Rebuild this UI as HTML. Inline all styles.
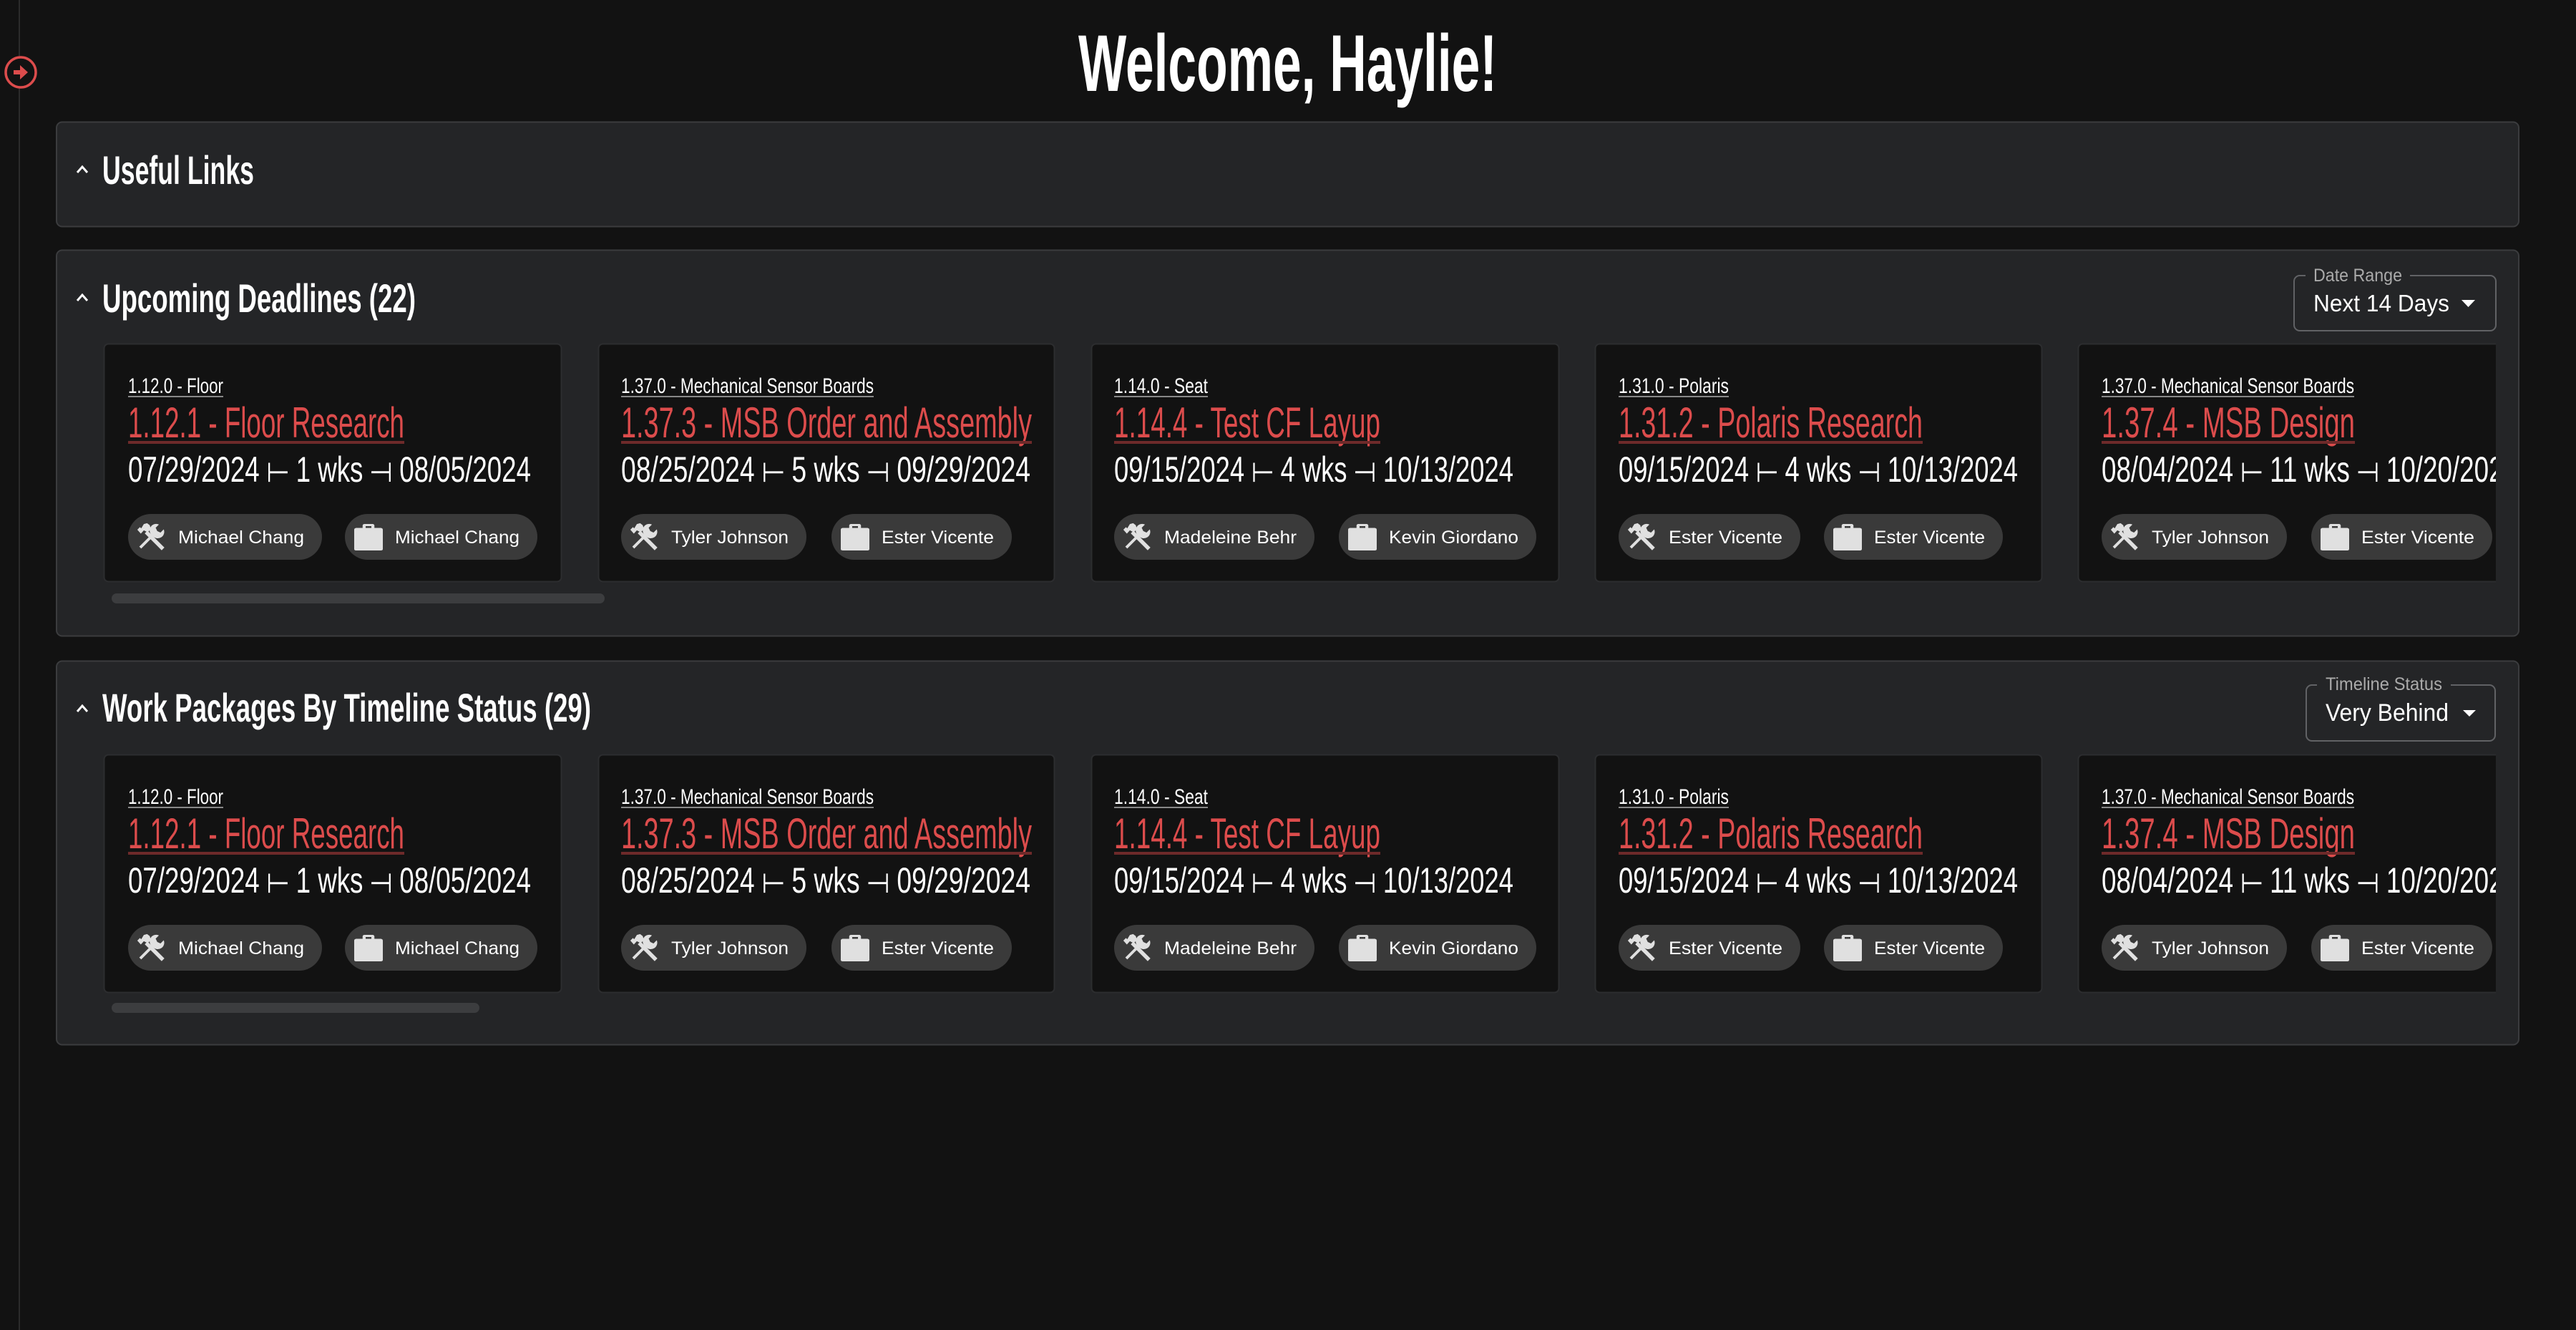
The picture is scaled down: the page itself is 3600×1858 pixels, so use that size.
<!DOCTYPE html>
<html><head><meta charset="utf-8"><style>
html,body{margin:0;padding:0;background:#121212;width:3600px;height:1858px;overflow:hidden}
svg{display:block}
.h{font-family:"Liberation Sans",sans-serif;font-weight:bold;fill:#fff}
.c{font-family:"Liberation Sans","DejaVu Sans",sans-serif;fill:#fff}
.bc{font-size:30px}
.tt{font-size:60px;fill:#dc4c4c}
.dt{font-size:50px}
.ch{font-family:"Liberation Sans",sans-serif;font-size:25px;fill:#fff}
.lat{font-family:"Liberation Sans",sans-serif}
</style></head><body>
<svg width="3600" height="1858" viewBox="0 0 3600 1858" xmlns="http://www.w3.org/2000/svg">
<defs>
<symbol id="tools" viewBox="1 1 22 22">
<g fill="#e0e0e0" stroke="none">
<path d="M7.2 9.3 L20.2 22.3 L22.3 20.2 L9.3 7.2 Z"/>
<path d="M1.5 6.5 L3.5 4.5 L4.5 5.5 L6.5 2.2 L9 1.5 L11 3 L12 6 L9.5 8.5 L6.5 7 L4.2 9.5 Z"/>
<path d="M3 19.5 L13 9.5 L14.5 11 L4.5 21 Z"/>
<path d="M12.2 10.3 L13.8 11.8 A5 5 0 0 0 21.8 6.2 L19.3 8.7 L16.8 7.5 L15.6 5 L18.1 2.5 A5 5 0 0 0 12.2 10.3 Z"/>
</g>
</symbol>
<symbol id="case" viewBox="3.5 2 17 20" preserveAspectRatio="none">
<path fill="#e0e0e0" d="M8.5 5 V3.2 C8.5 2.5 9 2 9.7 2 H14.3 C15 2 15.5 2.5 15.5 3.2 V5 H19 C20.1 5 20.5 5.6 20.5 6.5 V21 C20.5 21.6 20 22 19.4 22 H4.6 C4 22 3.5 21.6 3.5 21 V6.5 C3.5 5.6 3.9 5 5 5 Z M10.3 3.6 V5 H13.7 V3.6 Z"/>
</symbol>
<clipPath id="clip1"><rect x="140" y="470" width="3348" height="360"/></clipPath>
<clipPath id="clip2"><rect x="140" y="1044" width="3348" height="360"/></clipPath>
<g id="none"></g>
</defs>

<!-- sidebar -->
<rect x="26" y="0" width="2" height="1858" fill="#2b2b2b"/>
<circle cx="29" cy="101" r="21" fill="#121212" stroke="#dc4c4c" stroke-width="3.5"/>
<path d="M19 98 H28 V91 L39 101 L28 111 V104 H19 Z" fill="#dc4c4c"/>

<!-- title -->
<text class="h" x="1507" y="127" font-size="112" textLength="585" lengthAdjust="spacingAndGlyphs">Welcome, Haylie!</text>

<!-- panel 1 -->
<rect x="79" y="170.5" width="3441" height="146" rx="8" fill="#242527" stroke="#3b3c3e" stroke-width="2"/>
<path d="M108 241 L115 233 L122 241" fill="none" stroke="#fff" stroke-width="3"/>
<text class="h" x="143" y="257" font-size="56" textLength="212" lengthAdjust="spacingAndGlyphs">Useful Links</text>

<!-- panel 2 -->
<rect x="79" y="349.5" width="3441" height="539" rx="8" fill="#242527" stroke="#3b3c3e" stroke-width="2"/>
<path d="M108 420 L115 412 L122 420" fill="none" stroke="#fff" stroke-width="3"/>
<text class="h" x="143" y="436" font-size="56" textLength="438" lengthAdjust="spacingAndGlyphs">Upcoming Deadlines (22)</text>
<rect x="3206" y="385" width="282" height="77" rx="8" fill="none" stroke="#616265" stroke-width="2"/>
<rect x="3222" y="376" width="146" height="16" fill="#242527"/>
<text class="lat" x="3233" y="393" font-size="25" fill="#aaa" textLength="124" lengthAdjust="spacingAndGlyphs">Date Range</text>
<text class="lat" x="3233" y="435" font-size="33" fill="#fff" textLength="190" lengthAdjust="spacingAndGlyphs">Next 14 Days</text>
<path d="M3440 419 H3459 L3449.5 429 Z" fill="#fff"/>

<!-- panel 3 -->
<rect x="79" y="923.5" width="3441" height="536" rx="8" fill="#242527" stroke="#3b3c3e" stroke-width="2"/>
<path d="M108 994 L115 986 L122 994" fill="none" stroke="#fff" stroke-width="3"/>
<text class="h" x="143" y="1008" font-size="56" textLength="683" lengthAdjust="spacingAndGlyphs">Work Packages By Timeline Status (29)</text>
<rect x="3223" y="957" width="264" height="78" rx="8" fill="none" stroke="#616265" stroke-width="2"/>
<rect x="3238" y="948" width="187" height="16" fill="#242527"/>
<text class="lat" x="3250" y="964" font-size="25" fill="#aaa" textLength="163" lengthAdjust="spacingAndGlyphs">Timeline Status</text>
<text class="lat" x="3250" y="1007" font-size="34" fill="#fff" textLength="172" lengthAdjust="spacingAndGlyphs">Very Behind</text>
<path d="M3442 992 H3460 L3451 1001 Z" fill="#fff"/>

<!-- ROW 1 -->
<g clip-path="url(#clip1)">
<g>
<rect x="145.5" y="480.5" width="639" height="332" rx="6" fill="#121212" stroke="#2c2d2f" stroke-width="2"/>
<text class="c bc" x="179" y="549" textLength="133" lengthAdjust="spacingAndGlyphs">1.12.0 - Floor</text><rect x="179" y="553" width="133" height="2" fill="#888"/>
<text class="c tt" x="179" y="611" textLength="386" lengthAdjust="spacingAndGlyphs">1.12.1 - Floor Research</text><rect x="179" y="616" width="386" height="4" fill="#6e2a2a"/>
<text class="c dt" x="179" y="673" textLength="563" lengthAdjust="spacingAndGlyphs">07/29/2024 ⟝ 1 wks ⟞ 08/05/2024</text>
<rect x="179" y="718" width="271" height="64" rx="32" fill="#3a3a3a"/><use href="#tools" x="191" y="730" width="40" height="40"/><text class="ch" x="249" y="759" textLength="176" lengthAdjust="spacingAndGlyphs">Michael Chang</text>
<rect x="482" y="718" width="269" height="64" rx="32" fill="#3a3a3a"/><use href="#case" x="495" y="732" width="40" height="37"/><text class="ch" x="552" y="759" textLength="174" lengthAdjust="spacingAndGlyphs">Michael Chang</text>
</g>
<g>
<rect x="836.5" y="480.5" width="637" height="332" rx="6" fill="#121212" stroke="#2c2d2f" stroke-width="2"/>
<text class="c bc" x="868" y="549" textLength="353" lengthAdjust="spacingAndGlyphs">1.37.0 - Mechanical Sensor Boards</text><rect x="868" y="553" width="353" height="2" fill="#888"/>
<text class="c tt" x="868" y="611" textLength="574" lengthAdjust="spacingAndGlyphs">1.37.3 - MSB Order and Assembly</text><rect x="868" y="616" width="574" height="4" fill="#6e2a2a"/>
<text class="c dt" x="868" y="673" textLength="572" lengthAdjust="spacingAndGlyphs">08/25/2024 ⟝ 5 wks ⟞ 09/29/2024</text>
<rect x="868" y="718" width="259" height="64" rx="32" fill="#3a3a3a"/><use href="#tools" x="880" y="730" width="40" height="40"/><text class="ch" x="938" y="759" textLength="164" lengthAdjust="spacingAndGlyphs">Tyler Johnson</text>
<rect x="1162" y="718" width="252" height="64" rx="32" fill="#3a3a3a"/><use href="#case" x="1175" y="732" width="40" height="37"/><text class="ch" x="1232" y="759" textLength="157" lengthAdjust="spacingAndGlyphs">Ester Vicente</text>
</g>
<g>
<rect x="1525.5" y="480.5" width="653" height="332" rx="6" fill="#121212" stroke="#2c2d2f" stroke-width="2"/>
<text class="c bc" x="1557" y="549" textLength="131" lengthAdjust="spacingAndGlyphs">1.14.0 - Seat</text><rect x="1557" y="553" width="131" height="2" fill="#888"/>
<text class="c tt" x="1557" y="611" textLength="372" lengthAdjust="spacingAndGlyphs">1.14.4 - Test CF Layup</text><rect x="1557" y="616" width="372" height="4" fill="#6e2a2a"/>
<text class="c dt" x="1557" y="673" textLength="558" lengthAdjust="spacingAndGlyphs">09/15/2024 ⟝ 4 wks ⟞ 10/13/2024</text>
<rect x="1557" y="718" width="280" height="64" rx="32" fill="#3a3a3a"/><use href="#tools" x="1569" y="730" width="40" height="40"/><text class="ch" x="1627" y="759" textLength="185" lengthAdjust="spacingAndGlyphs">Madeleine Behr</text>
<rect x="1871" y="718" width="276" height="64" rx="32" fill="#3a3a3a"/><use href="#case" x="1884" y="732" width="40" height="37"/><text class="ch" x="1941" y="759" textLength="181" lengthAdjust="spacingAndGlyphs">Kevin Giordano</text>
</g>
<g>
<rect x="2229.5" y="480.5" width="624" height="332" rx="6" fill="#121212" stroke="#2c2d2f" stroke-width="2"/>
<text class="c bc" x="2262" y="549" textLength="154" lengthAdjust="spacingAndGlyphs">1.31.0 - Polaris</text><rect x="2262" y="553" width="154" height="2" fill="#888"/>
<text class="c tt" x="2262" y="611" textLength="425" lengthAdjust="spacingAndGlyphs">1.31.2 - Polaris Research</text><rect x="2262" y="616" width="425" height="4" fill="#6e2a2a"/>
<text class="c dt" x="2262" y="673" textLength="558" lengthAdjust="spacingAndGlyphs">09/15/2024 ⟝ 4 wks ⟞ 10/13/2024</text>
<rect x="2262" y="718" width="254" height="64" rx="32" fill="#3a3a3a"/><use href="#tools" x="2274" y="730" width="40" height="40"/><text class="ch" x="2332" y="759" textLength="159" lengthAdjust="spacingAndGlyphs">Ester Vicente</text>
<rect x="2549" y="718" width="250" height="64" rx="32" fill="#3a3a3a"/><use href="#case" x="2562" y="732" width="40" height="37"/><text class="ch" x="2619" y="759" textLength="155" lengthAdjust="spacingAndGlyphs">Ester Vicente</text>
</g>
<g>
<rect x="2904.5" y="480.5" width="650" height="332" rx="6" fill="#121212" stroke="#2c2d2f" stroke-width="2"/>
<text class="c bc" x="2937" y="549" textLength="353" lengthAdjust="spacingAndGlyphs">1.37.0 - Mechanical Sensor Boards</text><rect x="2937" y="553" width="353" height="2" fill="#888"/>
<text class="c tt" x="2937" y="611" textLength="354" lengthAdjust="spacingAndGlyphs">1.37.4 - MSB Design</text><rect x="2937" y="616" width="354" height="4" fill="#6e2a2a"/>
<text class="c dt" x="2937" y="673" textLength="582" lengthAdjust="spacingAndGlyphs">08/04/2024 ⟝ 11 wks ⟞ 10/20/2024</text>
<rect x="2937" y="718" width="259" height="64" rx="32" fill="#3a3a3a"/><use href="#tools" x="2949" y="730" width="40" height="40"/><text class="ch" x="3007" y="759" textLength="164" lengthAdjust="spacingAndGlyphs">Tyler Johnson</text>
<rect x="3230" y="718" width="253" height="64" rx="32" fill="#3a3a3a"/><use href="#case" x="3243" y="732" width="40" height="37"/><text class="ch" x="3300" y="759" textLength="158" lengthAdjust="spacingAndGlyphs">Ester Vicente</text>
</g>
</g>
<rect x="156" y="829" width="689" height="14" rx="7" fill="#3c3d3f"/>

<!-- ROW 2 -->
<g clip-path="url(#clip2)">
<g transform="translate(0,574)">
<g>
<rect x="145.5" y="480.5" width="639" height="332" rx="6" fill="#121212" stroke="#2c2d2f" stroke-width="2"/>
<text class="c bc" x="179" y="549" textLength="133" lengthAdjust="spacingAndGlyphs">1.12.0 - Floor</text><rect x="179" y="553" width="133" height="2" fill="#888"/>
<text class="c tt" x="179" y="611" textLength="386" lengthAdjust="spacingAndGlyphs">1.12.1 - Floor Research</text><rect x="179" y="616" width="386" height="4" fill="#6e2a2a"/>
<text class="c dt" x="179" y="673" textLength="563" lengthAdjust="spacingAndGlyphs">07/29/2024 ⟝ 1 wks ⟞ 08/05/2024</text>
<rect x="179" y="718" width="271" height="64" rx="32" fill="#3a3a3a"/><use href="#tools" x="191" y="730" width="40" height="40"/><text class="ch" x="249" y="759" textLength="176" lengthAdjust="spacingAndGlyphs">Michael Chang</text>
<rect x="482" y="718" width="269" height="64" rx="32" fill="#3a3a3a"/><use href="#case" x="495" y="732" width="40" height="37"/><text class="ch" x="552" y="759" textLength="174" lengthAdjust="spacingAndGlyphs">Michael Chang</text>
</g>
<g>
<rect x="836.5" y="480.5" width="637" height="332" rx="6" fill="#121212" stroke="#2c2d2f" stroke-width="2"/>
<text class="c bc" x="868" y="549" textLength="353" lengthAdjust="spacingAndGlyphs">1.37.0 - Mechanical Sensor Boards</text><rect x="868" y="553" width="353" height="2" fill="#888"/>
<text class="c tt" x="868" y="611" textLength="574" lengthAdjust="spacingAndGlyphs">1.37.3 - MSB Order and Assembly</text><rect x="868" y="616" width="574" height="4" fill="#6e2a2a"/>
<text class="c dt" x="868" y="673" textLength="572" lengthAdjust="spacingAndGlyphs">08/25/2024 ⟝ 5 wks ⟞ 09/29/2024</text>
<rect x="868" y="718" width="259" height="64" rx="32" fill="#3a3a3a"/><use href="#tools" x="880" y="730" width="40" height="40"/><text class="ch" x="938" y="759" textLength="164" lengthAdjust="spacingAndGlyphs">Tyler Johnson</text>
<rect x="1162" y="718" width="252" height="64" rx="32" fill="#3a3a3a"/><use href="#case" x="1175" y="732" width="40" height="37"/><text class="ch" x="1232" y="759" textLength="157" lengthAdjust="spacingAndGlyphs">Ester Vicente</text>
</g>
<g>
<rect x="1525.5" y="480.5" width="653" height="332" rx="6" fill="#121212" stroke="#2c2d2f" stroke-width="2"/>
<text class="c bc" x="1557" y="549" textLength="131" lengthAdjust="spacingAndGlyphs">1.14.0 - Seat</text><rect x="1557" y="553" width="131" height="2" fill="#888"/>
<text class="c tt" x="1557" y="611" textLength="372" lengthAdjust="spacingAndGlyphs">1.14.4 - Test CF Layup</text><rect x="1557" y="616" width="372" height="4" fill="#6e2a2a"/>
<text class="c dt" x="1557" y="673" textLength="558" lengthAdjust="spacingAndGlyphs">09/15/2024 ⟝ 4 wks ⟞ 10/13/2024</text>
<rect x="1557" y="718" width="280" height="64" rx="32" fill="#3a3a3a"/><use href="#tools" x="1569" y="730" width="40" height="40"/><text class="ch" x="1627" y="759" textLength="185" lengthAdjust="spacingAndGlyphs">Madeleine Behr</text>
<rect x="1871" y="718" width="276" height="64" rx="32" fill="#3a3a3a"/><use href="#case" x="1884" y="732" width="40" height="37"/><text class="ch" x="1941" y="759" textLength="181" lengthAdjust="spacingAndGlyphs">Kevin Giordano</text>
</g>
<g>
<rect x="2229.5" y="480.5" width="624" height="332" rx="6" fill="#121212" stroke="#2c2d2f" stroke-width="2"/>
<text class="c bc" x="2262" y="549" textLength="154" lengthAdjust="spacingAndGlyphs">1.31.0 - Polaris</text><rect x="2262" y="553" width="154" height="2" fill="#888"/>
<text class="c tt" x="2262" y="611" textLength="425" lengthAdjust="spacingAndGlyphs">1.31.2 - Polaris Research</text><rect x="2262" y="616" width="425" height="4" fill="#6e2a2a"/>
<text class="c dt" x="2262" y="673" textLength="558" lengthAdjust="spacingAndGlyphs">09/15/2024 ⟝ 4 wks ⟞ 10/13/2024</text>
<rect x="2262" y="718" width="254" height="64" rx="32" fill="#3a3a3a"/><use href="#tools" x="2274" y="730" width="40" height="40"/><text class="ch" x="2332" y="759" textLength="159" lengthAdjust="spacingAndGlyphs">Ester Vicente</text>
<rect x="2549" y="718" width="250" height="64" rx="32" fill="#3a3a3a"/><use href="#case" x="2562" y="732" width="40" height="37"/><text class="ch" x="2619" y="759" textLength="155" lengthAdjust="spacingAndGlyphs">Ester Vicente</text>
</g>
<g>
<rect x="2904.5" y="480.5" width="650" height="332" rx="6" fill="#121212" stroke="#2c2d2f" stroke-width="2"/>
<text class="c bc" x="2937" y="549" textLength="353" lengthAdjust="spacingAndGlyphs">1.37.0 - Mechanical Sensor Boards</text><rect x="2937" y="553" width="353" height="2" fill="#888"/>
<text class="c tt" x="2937" y="611" textLength="354" lengthAdjust="spacingAndGlyphs">1.37.4 - MSB Design</text><rect x="2937" y="616" width="354" height="4" fill="#6e2a2a"/>
<text class="c dt" x="2937" y="673" textLength="582" lengthAdjust="spacingAndGlyphs">08/04/2024 ⟝ 11 wks ⟞ 10/20/2024</text>
<rect x="2937" y="718" width="259" height="64" rx="32" fill="#3a3a3a"/><use href="#tools" x="2949" y="730" width="40" height="40"/><text class="ch" x="3007" y="759" textLength="164" lengthAdjust="spacingAndGlyphs">Tyler Johnson</text>
<rect x="3230" y="718" width="253" height="64" rx="32" fill="#3a3a3a"/><use href="#case" x="3243" y="732" width="40" height="37"/><text class="ch" x="3300" y="759" textLength="158" lengthAdjust="spacingAndGlyphs">Ester Vicente</text>
</g>
</g>
</g>
<rect x="156" y="1401" width="514" height="14" rx="7" fill="#3c3d3f"/>
</svg>
</body></html>
